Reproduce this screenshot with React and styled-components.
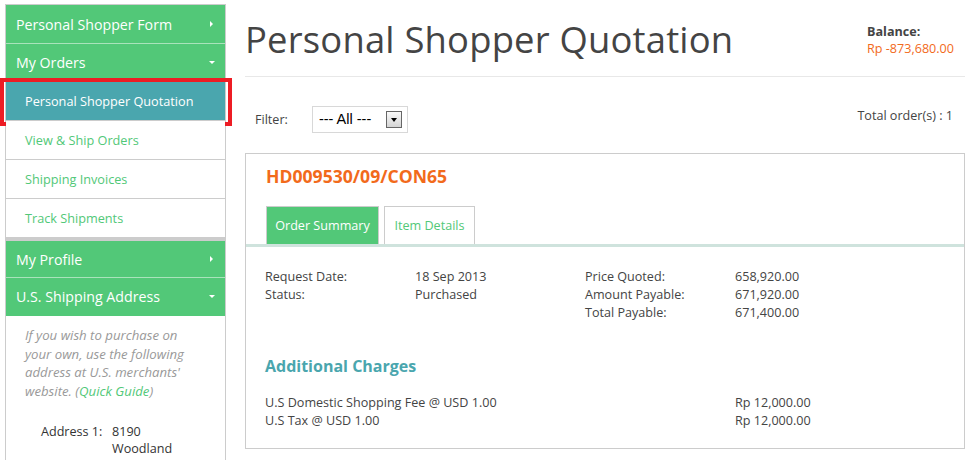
import React from "react";
import styled, { createGlobalStyle, css } from "styled-components";

const GlobalStyle = createGlobalStyle`
  html, body { margin: 0; padding: 0; background: #fff; }
  body { font-family: "Open Sans", "DejaVu Sans", sans-serif; color: #333; }
  * { box-sizing: border-box; }
`;

const GREEN = "#52c878";
const TEAL = "#4aa6ae";
const ORANGE = "#f26a1b";

const Page = styled.div`
  display: flex;
  align-items: flex-start;
  padding-left: 5px;
  width: 975px;
  height: 460px;
  overflow: hidden;
`;

const Sidebar = styled.nav`
  width: 221px;
  margin-top: 4px;
  border: 1px solid #cccccc;
  border-bottom: none;
  min-height: 470px;
  flex-shrink: 0;
`;

const Arrow = styled.span`
  width: 0;
  height: 0;
  ${(p) =>
    p.$down
      ? css`
          border-left: 3px solid transparent;
          border-right: 3px solid transparent;
          border-top: 3px solid #fff;
          margin-right: 2px;
        `
      : css`
          border-top: 3px solid transparent;
          border-bottom: 3px solid transparent;
          border-left: 3px solid #fff;
          margin-right: 4px;
        `}
`;

const NavHeader = styled.div`
  display: flex;
  align-items: center;
  justify-content: space-between;
  height: ${(p) => p.$h}px;
  padding: 0 8px 0 10px;
  background: ${GREEN};
  color: #fff;
  font-size: 14.2px;
  border-bottom: 1px solid ${(p) => (p.$last ? GREEN : "#a9e3bb")};
  border-top: ${(p) => (p.$thickTop ? "3px solid #cccccc" : "none")};
`;

const SubItem = styled.div`
  position: relative;
  display: flex;
  align-items: center;
  height: 39px;
  padding-left: 19px;
  font-size: 12.7px;
  color: ${(p) => (p.$active ? "#fff" : GREEN)};
  background: ${(p) => (p.$active ? TEAL : "#fff")};
  border-bottom: 1px solid #cccccc;
  ${(p) =>
    p.$active &&
    css`
      &::after {
        content: "";
        position: absolute;
        top: -4px;
        left: -6px;
        right: -7px;
        bottom: -6px;
        border: 4px solid #ed1c24;
        pointer-events: none;
      }
    `}
`;

const AddressPanel = styled.div`
  padding: 10px 10px 0 19px;
`;

const Note = styled.p`
  margin: 0;
  max-width: 166px;
  font-style: italic;
  font-size: 13.2px;
  line-height: 18.7px;
  color: #999;
`;

const NoteLink = styled.span`
  color: ${GREEN};
`;

const AddressGrid = styled.div`
  display: grid;
  grid-template-columns: 71px 1fr;
  margin-top: 22px;
  padding-left: 16px;
  font-size: 12.6px;
  line-height: 17.5px;
  color: #333;
`;

const Main = styled.main`
  width: 720px;
  margin-left: 19px;
  flex-shrink: 0;
`;

const Header = styled.header`
  display: flex;
  justify-content: space-between;
  align-items: flex-start;
  height: 77px;
  border-bottom: 1px solid #e8e8e8;
`;

const Title = styled.h1`
  margin: 16px 0 0 0;
  font-size: 36.4px;
  font-weight: 400;
  line-height: 46px;
  color: #444;
  letter-spacing: 0.2px;
`;

const Balance = styled.div`
  margin: 23px 11px 0 0;
  font-size: 12.6px;
  line-height: 17px;
`;

const BalanceLabel = styled.div`
  font-weight: 700;
  color: #444;
`;

const BalanceValue = styled.div`
  color: ${ORANGE};
`;

const FilterRow = styled.div`
  display: flex;
  justify-content: space-between;
  align-items: center;
  height: 76px;
  padding: 0 12px 0 10px;
`;

const FilterLeft = styled.div`
  display: flex;
  align-items: center;
  font-size: 12.6px;
  color: #444;
  gap: 24px;
  margin-top: 8px;
`;

const FakeSelect = styled.div`
  display: flex;
  align-items: center;
  justify-content: space-between;
  width: 96px;
  height: 27px;
  border: 1px solid #d8d8d8;
  padding: 0 5px 0 6px;
  font-family: "Liberation Sans", Arial, sans-serif;
  font-size: 14.5px;
  color: #000;
`;

const SelectBtn = styled.span`
  display: flex;
  align-items: center;
  justify-content: center;
  width: 16px;
  height: 17px;
  border: 1px solid #666;
  background: linear-gradient(#fafafa, #d4d4d4);
`;

const SelectCaret = styled.span`
  width: 0;
  height: 0;
  border-left: 3.5px solid transparent;
  border-right: 3.5px solid transparent;
  border-top: 4px solid #000;
  margin-top: 1px;
`;

const TotalOrders = styled.div`
  font-size: 12.6px;
  color: #444;
`;

const OrderBox = styled.section`
  border: 1px solid #cccccc;
  width: 720px;
  height: 296px;
`;

const OrderNo = styled.h2`
  margin: 0;
  padding: 10px 0 0 20px;
  height: 52px;
  font-size: 17.6px;
  font-weight: 700;
  color: ${ORANGE};
  line-height: 24px;
`;

const Tabs = styled.div`
  display: flex;
  gap: 5px;
  padding-left: 20px;
  border-bottom: 3px solid #cfe3dd;
`;

const Tab = styled.div`
  display: flex;
  align-items: center;
  justify-content: center;
  height: 38px;
  width: ${(p) => p.$w}px;
  font-size: 12.6px;
  border: 1px solid #cccccc;
  border-bottom: none;
  background: ${(p) => (p.$active ? GREEN : "#fff")};
  color: ${(p) => (p.$active ? "#fff" : GREEN)};
`;

const Body = styled.div`
  padding: 21px 19px 0 19px;
  font-size: 12.6px;
  line-height: 18px;
  color: #444;
`;

const SummaryGrid = styled.div`
  display: grid;
  grid-template-columns: 150px 170px 150px 1fr;
`;

const Cell = styled.div`
  grid-column: ${(p) => p.$col};
  grid-row: ${(p) => p.$row};
`;

const SectionTitle = styled.h3`
  margin: 32px 0 0 0;
  font-size: 16px;
  font-weight: 700;
  line-height: 24px;
  color: ${TEAL};
`;

const ChargeRows = styled.div`
  display: grid;
  grid-template-columns: 470px 1fr;
  margin-top: 16px;
`;

export default function App() {
  const subs = [
    { label: "Personal Shopper Quotation", active: true },
    { label: "View & Ship Orders" },
    { label: "Shipping Invoices" },
    { label: "Track Shipments" },
  ];
  const left = [
    ["Request Date:", "18 Sep 2013"],
    ["Status:", "Purchased"],
  ];
  const right = [
    ["Price Quoted:", "658,920.00"],
    ["Amount Payable:", "671,920.00"],
    ["Total Payable:", "671,400.00"],
  ];
  const charges = [
    ["U.S Domestic Shopping Fee @ USD 1.00", "Rp 12,000.00"],
    ["U.S Tax @ USD 1.00", "Rp 12,000.00"],
  ];
  return (
    <>
      <GlobalStyle />
      <Page>
        <Sidebar>
          <NavHeader $h={39}>
            Personal Shopper Form <Arrow />
          </NavHeader>
          <NavHeader $h={38} $last>
            My Orders <Arrow $down />
          </NavHeader>
          {subs.map((s) => (
            <SubItem key={s.label} $active={s.active}>
              {s.label}
            </SubItem>
          ))}
          <NavHeader $h={40} $thickTop>
            My Profile <Arrow />
          </NavHeader>
          <NavHeader $h={38} $last>
            U.S. Shipping Address <Arrow $down />
          </NavHeader>
          <AddressPanel>
            <Note>
              If you wish to purchase on your own, use the following address at U.S. merchants'
              website. (<NoteLink>Quick Guide</NoteLink>)
            </Note>
            <AddressGrid>
              <span>Address 1:</span>
              <span>
                8190
                <br />
                Woodland
              </span>
            </AddressGrid>
          </AddressPanel>
        </Sidebar>
        <Main>
          <Header>
            <Title>Personal Shopper Quotation</Title>
            <Balance>
              <BalanceLabel>Balance:</BalanceLabel>
              <BalanceValue>Rp -873,680.00</BalanceValue>
            </Balance>
          </Header>
          <FilterRow>
            <FilterLeft>
              <span>Filter:</span>
              <FakeSelect>
                <span>--- All ---</span>
                <SelectBtn>
                  <SelectCaret />
                </SelectBtn>
              </FakeSelect>
            </FilterLeft>
            <TotalOrders>Total order(s) : 1</TotalOrders>
          </FilterRow>
          <OrderBox>
            <OrderNo>HD009530/09/CON65</OrderNo>
            <Tabs>
              <Tab $active $w={113}>Order Summary</Tab>
              <Tab $w={91}>Item Details</Tab>
            </Tabs>
            <Body>
              <SummaryGrid>
                {left.map(([k, v], i) => (
                  <React.Fragment key={k}>
                    <Cell $col={1} $row={i + 1}>{k}</Cell>
                    <Cell $col={2} $row={i + 1}>{v}</Cell>
                  </React.Fragment>
                ))}
                {right.map(([k, v], i) => (
                  <React.Fragment key={k}>
                    <Cell $col={3} $row={i + 1}>{k}</Cell>
                    <Cell $col={4} $row={i + 1}>{v}</Cell>
                  </React.Fragment>
                ))}
              </SummaryGrid>
              <SectionTitle>Additional Charges</SectionTitle>
              <ChargeRows>
                {charges.map(([k, v]) => (
                  <React.Fragment key={k}>
                    <span>{k}</span>
                    <span>{v}</span>
                  </React.Fragment>
                ))}
              </ChargeRows>
            </Body>
          </OrderBox>
        </Main>
      </Page>
    </>
  );
}
